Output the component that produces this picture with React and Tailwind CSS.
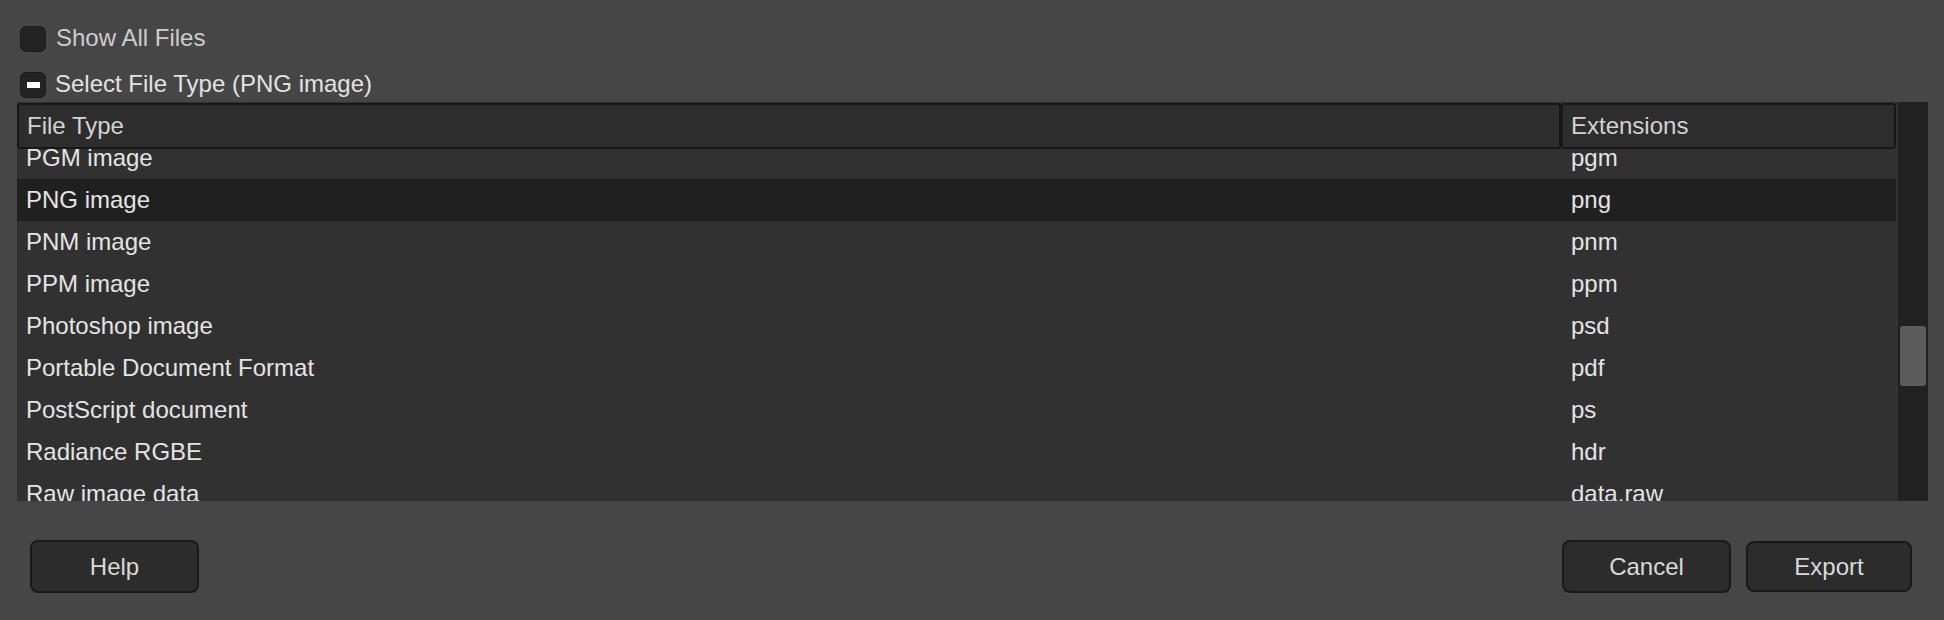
import React from 'react';

const rows = [
  { type: 'PGM image', ext: 'pgm' },
  { type: 'PNG image', ext: 'png', selected: true },
  { type: 'PNM image', ext: 'pnm' },
  { type: 'PPM image', ext: 'ppm' },
  { type: 'Photoshop image', ext: 'psd' },
  { type: 'Portable Document Format', ext: 'pdf' },
  { type: 'PostScript document', ext: 'ps' },
  { type: 'Radiance RGBE', ext: 'hdr' },
  { type: 'Raw image data', ext: 'data.raw' },
];

function Check({ label, mixed, className }) {
  return (
    <div className="flex items-start h-[26px] gap-[9px]">
      <div
        className="w-[26px] h-[26px] rounded-[6px] bg-[#232323] border border-[#1b1b1b]
          flex items-center justify-center"
      >
        {mixed && <div className="w-[13px] h-[6px] bg-white" />}
      </div>
      <div className={className}>{label}</div>
    </div>
  );
}

function Button({ children, className }) {
  return (
    <button
      className={`h-[53px] rounded-[8px] bg-[#2c2c2c] border-2 border-[#191919]
        text-[24px] text-[#d9d9d9] flex items-center justify-center ${className}`}
    >
      {children}
    </button>
  );
}

export default function App() {
  return (
    <div
      className="w-[1944px] h-[620px] bg-[#464646] overflow-hidden flex flex-col"
      style={{ fontFamily: '"Liberation Sans", Arial, sans-serif' }}
    >
      <div className="pt-[26px] pl-[20px] flex flex-col gap-[20px]">
        <Check label="Show All Files" className="text-[24px] leading-[24px] text-[#cdcdcd] pl-[1px]" />
        <Check
          label="Select File Type (PNG image)"
          mixed
          className="text-[24px] leading-[24px] text-[#e2e2e2]"
        />
      </div>

      <div className="mt-[4px] ml-[17px] w-[1911px] h-[399px] flex">
        <div className="w-[1881px] h-full bg-[#313131] flex flex-col pt-[1px] overflow-hidden">
          <div className="flex h-[46px] shrink-0 z-10">
            <div
              className="w-[1544px] h-full bg-[#2d2d2d] border-2 border-[#171717] rounded-[3px]
                pl-[8px] flex items-center text-[24px] text-[#d2d2d2]"
            >
              File Type
            </div>
            <div
              className="w-[335px] h-full bg-[#2d2d2d] border-2 border-[#171717] rounded-[3px]
                pl-[8px] flex items-center text-[24px] text-[#d2d2d2]"
            >
              Extensions
            </div>
          </div>
          <div className="flex-1 overflow-hidden">
            <div className="-mt-[12px] flex flex-col">
              {rows.map((r) => (
                <div
                  key={r.type}
                  className={`w-[1879px] h-[42px] flex items-center text-[24px] text-[#e4e4e4]
                    ${r.selected ? 'bg-[#202020]' : ''}`}
                >
                  <div className="w-[1544px] pl-[9px]">{r.type}</div>
                  <div className="pl-[10px]">{r.ext}</div>
                </div>
              ))}
            </div>
          </div>
        </div>
        <div className="w-[30px] h-full bg-[#212121] flex flex-col items-center">
          <div className="mt-[224px] w-[26px] h-[60px] rounded-[3px] bg-[#5c5c5c]" />
        </div>
      </div>

      <div className="mt-[39px] pl-[30px] pr-[32px] flex items-center justify-between">
        <Button className="w-[169px]">Help</Button>
        <div className="flex items-center gap-[15px]">
          <Button className="w-[169px]">Cancel</Button>
          <Button className="w-[166px] !h-[51px]">Export</Button>
        </div>
      </div>
    </div>
  );
}
